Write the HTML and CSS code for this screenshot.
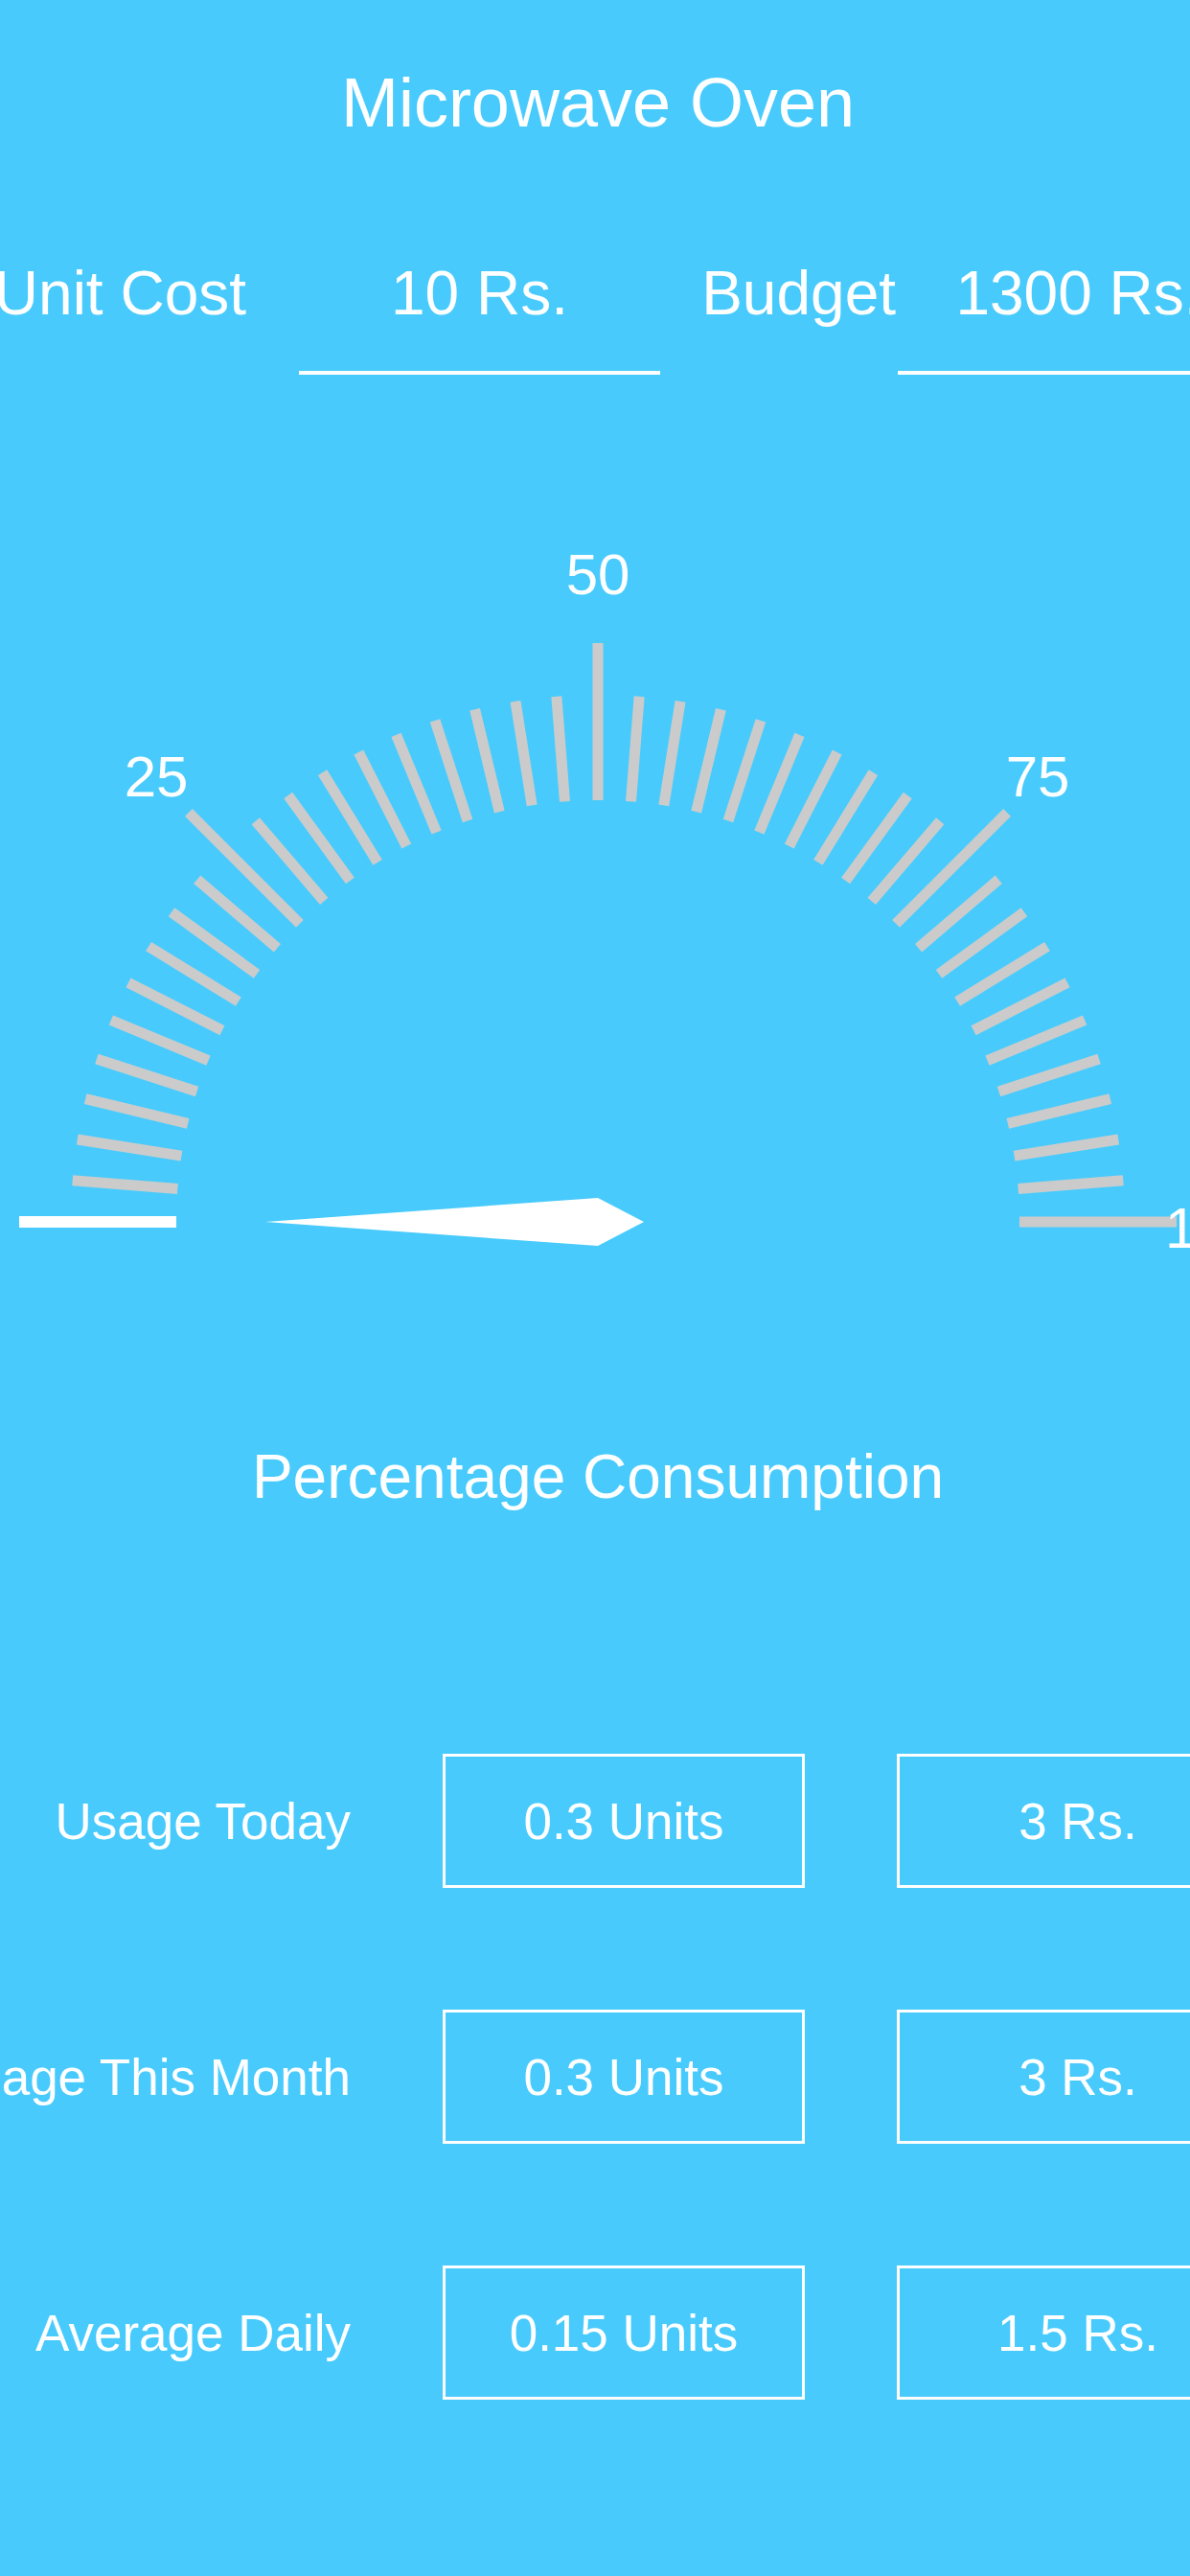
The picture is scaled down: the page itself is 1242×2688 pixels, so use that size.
FILE: index.html
```html
<!DOCTYPE html>
<html lang="en">

<head>
  <meta charset="UTF-8" />
  <meta name="viewport" content="width=device-width, initial-scale=1.0" />
  <title>Microwave Oven</title>
  <link rel="stylesheet" href="styles.css">
</head>

<body>
  <main class="screen">
    <h1 class="title">Microwave Oven</h1>

    <section class="cost_row">
      <span class="cost_label cost_label-unit">Unit Cost</span>
      <div class="cost_field">10 Rs.</div>
      <span class="cost_label cost_label-budget">Budget</span>
      <div class="cost_field">1300 Rs.</div>
    </section>

    <!-- gauge: centre of the dial sits at (624, 875) -->
    <svg class="gauge" width="1242" height="920" viewBox="0 0 1242 920">
      <defs>
        <line id="tick_minor" x1="-440" y1="0" x2="-550" y2="0" />
        <line id="tick_major" x1="-440" y1="0" x2="-604" y2="0" />
      </defs>
      <g transform="translate(624 875)" class="gauge_ticks">
        <use href="#tick_major" class="tick_active" />
        <use href="#tick_minor" transform="rotate(4.5)" />
        <use href="#tick_minor" transform="rotate(9)" />
        <use href="#tick_minor" transform="rotate(13.5)" />
        <use href="#tick_minor" transform="rotate(18)" />
        <use href="#tick_minor" transform="rotate(22.5)" />
        <use href="#tick_minor" transform="rotate(27)" />
        <use href="#tick_minor" transform="rotate(31.5)" />
        <use href="#tick_minor" transform="rotate(36)" />
        <use href="#tick_minor" transform="rotate(40.5)" />
        <use href="#tick_major" transform="rotate(45)" />
        <use href="#tick_minor" transform="rotate(49.5)" />
        <use href="#tick_minor" transform="rotate(54)" />
        <use href="#tick_minor" transform="rotate(58.5)" />
        <use href="#tick_minor" transform="rotate(63)" />
        <use href="#tick_minor" transform="rotate(67.5)" />
        <use href="#tick_minor" transform="rotate(72)" />
        <use href="#tick_minor" transform="rotate(76.5)" />
        <use href="#tick_minor" transform="rotate(81)" />
        <use href="#tick_minor" transform="rotate(85.5)" />
        <use href="#tick_major" transform="rotate(90)" />
        <use href="#tick_minor" transform="rotate(94.5)" />
        <use href="#tick_minor" transform="rotate(99)" />
        <use href="#tick_minor" transform="rotate(103.5)" />
        <use href="#tick_minor" transform="rotate(108)" />
        <use href="#tick_minor" transform="rotate(112.5)" />
        <use href="#tick_minor" transform="rotate(117)" />
        <use href="#tick_minor" transform="rotate(121.5)" />
        <use href="#tick_minor" transform="rotate(126)" />
        <use href="#tick_minor" transform="rotate(130.5)" />
        <use href="#tick_major" transform="rotate(135)" />
        <use href="#tick_minor" transform="rotate(139.5)" />
        <use href="#tick_minor" transform="rotate(144)" />
        <use href="#tick_minor" transform="rotate(148.5)" />
        <use href="#tick_minor" transform="rotate(153)" />
        <use href="#tick_minor" transform="rotate(157.5)" />
        <use href="#tick_minor" transform="rotate(162)" />
        <use href="#tick_minor" transform="rotate(166.5)" />
        <use href="#tick_minor" transform="rotate(171)" />
        <use href="#tick_minor" transform="rotate(175.5)" />
        <use href="#tick_major" transform="rotate(180)" />
      </g>
      <g class="gauge_labels">
        <text x="-18" y="902">0</text>
        <text x="163" y="431">25</text>
        <text x="624" y="220">50</text>
        <text x="1083" y="431">75</text>
        <text x="1266" y="902">100</text>
      </g>
      <polygon class="gauge_needle" points="277,875 624,850 672,875 624,900" />
    </svg>

    <h2 class="gauge_caption">Percentage Consumption</h2>

    <section class="usage">
      <div class="usage_row">
        <span class="usage_label">Usage Today</span>
        <output class="usage_box">0.3 Units</output>
        <output class="usage_box">3 Rs.</output>
      </div>
      <div class="usage_row">
        <span class="usage_label">Usage This Month</span>
        <output class="usage_box">0.3 Units</output>
        <output class="usage_box">3 Rs.</output>
      </div>
      <div class="usage_row">
        <span class="usage_label">Average Daily</span>
        <output class="usage_box">0.15 Units</output>
        <output class="usage_box">1.5 Rs.</output>
      </div>
    </section>
  </main>
</body>
</html>
```

FILE: styles.css
```css
* {
  box-sizing: border-box;
}

html,
body {
  margin: 0;
  padding: 0;
  background: #48cbfc;
}

body {
  overflow: hidden;
  color: #fff;
  font-family: "Liberation Sans", Arial, Helvetica, sans-serif;
  font-weight: 400;
}

.screen {
  width: 1242px;
  min-height: 2688px;
  overflow: hidden;
}

.title {
  margin: 71px 0 0;
  padding-left: 6px;
  font-size: 72px;
  line-height: 72px;
  font-weight: 400;
  text-align: center;
}

/* unit cost / budget row, wider than the screen on purpose */
.cost_row {
  display: flex;
  margin: 131px 0 0 -20px;
  white-space: nowrap;
  font-size: 64px;
  line-height: 64px;
}

.cost_row > * {
  flex-shrink: 0;
}

.cost_label {
  text-align: right;
}

.cost_label-unit {
  width: 277px;
  margin-right: 55px;
}

.cost_label-budget {
  width: 248px;
  padding-right: 2px;
}

.cost_field {
  width: 377px;
  padding-bottom: 49px;
  border-bottom: 4px solid #fff;
  text-align: center;
}

.gauge {
  display: block;
  margin-top: 9px;
}

.gauge_ticks {
  stroke: #cbcbcb;
  stroke-width: 11;
}

.gauge_ticks .tick_active {
  stroke: #fff;
  stroke-width: 12;
}

.gauge_labels {
  fill: #fff;
  font-family: "Liberation Sans", Arial, Helvetica, sans-serif;
  font-size: 60px;
  text-anchor: middle;
}

.gauge_needle {
  fill: #fff;
}

.gauge_caption {
  margin: 189px 0 0;
  padding-left: 6px;
  font-size: 64px;
  line-height: 64px;
  font-weight: 400;
  text-align: center;
}

.usage {
  margin-top: 257px;
}

.usage_row {
  display: flex;
  align-items: center;
  height: 140px;
  margin: 0 0 127px -12px;
  white-space: nowrap;
  font-size: 53px;
}

.usage_row > * {
  flex-shrink: 0;
}

/* long labels overflow to the left, like the right-aligned iOS label */
.usage_label {
  display: flex;
  justify-content: flex-end;
  width: 378px;
  margin-right: 96px;
}

.usage_box {
  display: flex;
  align-items: center;
  justify-content: center;
  width: 378px;
  height: 140px;
  margin-right: 96px;
  border: 3px solid #fff;
}
```
